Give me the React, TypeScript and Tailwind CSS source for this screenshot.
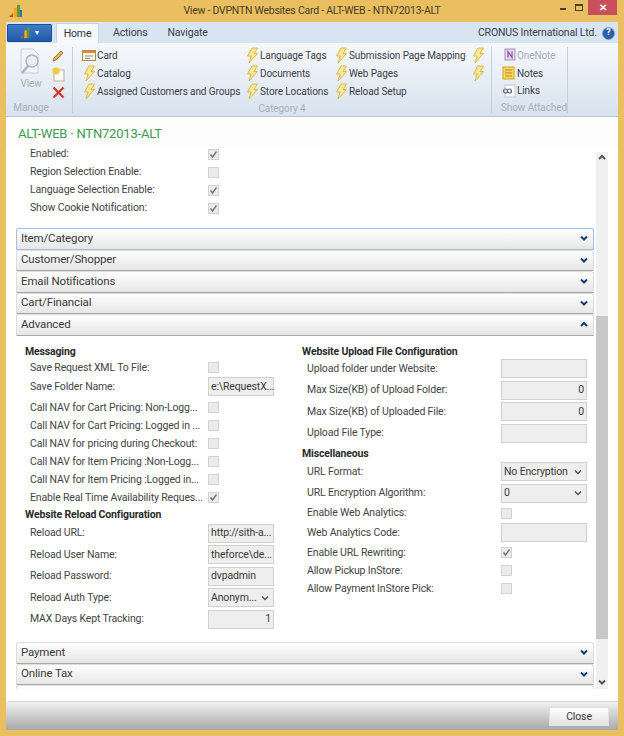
import type { ReactNode } from "react";

function Bolt() {
  return (
    <svg width="14" height="17" viewBox="0 0 14 17" className="shrink-0">
      <path d="M7 1 L12.5 1 L9 6.5 L12.5 6.5 L4 16 L6.2 9 L2.5 9 Z" fill="#fbe89a" stroke="#dcb84a" strokeWidth="1" strokeLinejoin="round" />
    </svg>
  );
}

function Chevron({ up = false, color = "#1d3a78", w = 2 }: { up?: boolean; color?: string; w?: number }) {
  return (
    <svg width="8" height="6" viewBox="0 0 8 6" className="shrink-0">
      <polyline points={up ? "1,5 4,2 7,5" : "1,1.5 4,4.5 7,1.5"} fill="none" stroke={color} strokeWidth={w} />
    </svg>
  );
}

function AppLogo({ size = 16 }: { size?: number }) {
  return (
    <svg width={size} height={size} viewBox="0 0 16 16" className="shrink-0">
      <path d="M1 14 L5 10 L5 14 Z" fill="#d9481e" />
      <rect x="6" y="5" width="3" height="9" fill="#f0a820" />
      <rect x="9" y="2" width="3" height="12" fill="#5c9a3a" />
      <rect x="12" y="7" width="2" height="7" fill="#3d6fb0" />
    </svg>
  );
}

function RibbonItem({ icon, children, dim = false }: { icon: ReactNode; children?: ReactNode; dim?: boolean }) {
  return (
    <div className={"flex h-[18px] items-center gap-[1px] pb-[1px] whitespace-nowrap " + (dim ? "text-[#a8adb5]" : "text-[#3c4048]")}>
      <span className="flex w-[15px] justify-center">{icon}</span>
      {children}
    </div>
  );
}

function Separator() {
  return <div className="h-[66px] w-px bg-[#c5cfdb]" />;
}

function GroupLabel({ children }: { children: ReactNode }) {
  return <div className="h-[16px] text-center leading-[16px] text-[#a9b0b9]">{children}</div>;
}

function Check({ on = false, label }: { on?: boolean; label: string }) {
  return (
    <span aria-label={label} className="flex h-[11px] w-[11px] items-center justify-center border border-[#d2d2d2] bg-[#ebebeb]">
      {on && (
        <svg width="9" height="9" viewBox="0 0 9 9">
          <polyline points="1.5,4.5 3.5,7 7.5,1.5" fill="none" stroke="#757575" strokeWidth="1.4" />
        </svg>
      )}
    </span>
  );
}

function CheckRow({ label, on, labelW = "w-[178px]" }: { label: string; on?: boolean; labelW?: string }) {
  return (
    <div className="flex h-[18px] items-center pl-[5px]">
      <div className={labelW + " whitespace-nowrap text-[#444444]"}>{label}</div>
      <Check on={on} label={label} />
    </div>
  );
}

function FieldRow({
  label,
  value,
  right = false,
  select = false,
  labelW = "w-[178px]",
  fieldW = "w-[66px]",
}: {
  label: string;
  value?: string;
  right?: boolean;
  select?: boolean;
  labelW?: string;
  fieldW?: string;
}) {
  return (
    <div className="flex h-[21.5px] items-center pl-[5px]">
      <div className={labelW + " whitespace-nowrap text-[#444444]"}>{label}</div>
      <div
        className={
          fieldW +
          " flex h-[19px] items-center border border-[#d0d0d0] bg-[#eeeeee] px-[2px] whitespace-nowrap text-[#3a3a3a] " +
          (right ? "justify-end" : "justify-between")
        }
      >
        <span>{value}</span>
        {select && (
          <span className="mr-[2px]">
            <Chevron color="#555555" w={1.5} />
          </span>
        )}
      </div>
    </div>
  );
}

function Heading({ children, h }: { children: ReactNode; h: string }) {
  return <div className={h + " flex items-center font-bold whitespace-nowrap text-[#2a2a2a]"}>{children}</div>;
}

function Section({ title, open = false, focus = false }: { title: string; open?: boolean; focus?: boolean }) {
  return (
    <div
      className={
        "flex h-[21.5px] shrink-0 items-center justify-between rounded-t-[3px] border bg-gradient-to-b from-white to-[#e6e6e6] pr-[5px] pb-[1px] pl-[4px] text-[11.5px] text-[#3a3a3a] " +
        (focus ? "border-[#a3bfe6] border-b-[#a9bcd8]" : "border-[#dddddd] border-b-[#a8a8a8]")
      }
    >
      <span>{title}</span>
      <Chevron up={open} />
    </div>
  );
}

export default function App() {
  const rightLabel = "w-[194px]";
  const rightField = "w-[86px]";
  return (
    <div className="flex h-[736px] w-[624px] flex-col overflow-hidden bg-[#e9bf62] font-['Roboto',sans-serif] text-[10.5px] tracking-[-0.15px]">
      {/* title bar */}
      <div className="relative flex h-[22px] shrink-0 items-center justify-center text-[10.5px] tracking-[-0.25px] text-[#4b3d22]">
        <span className="absolute top-[3px] left-[8px]">
          <AppLogo />
        </span>
        View - DVPNTN Websites Card - ALT-WEB - NTN72013-ALT
        <div className="absolute top-0 right-[7px] flex items-start">
          <div className="mt-[8px] mr-[9px] h-[2px] w-[6px] bg-[#4a4030]" />
          <div className="mt-[4px] mr-[5px] h-[7px] w-[8px] border border-t-2 border-[#4a4030]" />
          <div className="flex h-[15px] w-[29px] items-center justify-center bg-[#c9505a] text-[10px] font-bold text-white">
            ✕
          </div>
        </div>
      </div>

      <div className="mx-[6px] flex flex-1 flex-col bg-white">
        {/* tab strip */}
        <div className="flex h-[21px] shrink-0 items-end bg-[#d8e4f2] pl-px text-[#3c4048]">
          <div className="mb-[1px] flex h-[18px] w-[45px] items-center justify-center rounded-[1px] border border-[#1d4f94] bg-gradient-to-b from-[#3d7cc9] to-[#1f5aa8]">
            <AppLogo size={14} />
            <span className="ml-[1px] text-[7px] text-white">▼</span>
          </div>
          <div className="ml-[4px] flex h-[20px] w-[43px] items-center justify-center border border-b-0 border-[#c6d3e2] bg-[#f7f9fc] text-[#333333]">
            Home
          </div>
          <div className="ml-[14px] flex h-[20px] items-center">Actions</div>
          <div className="ml-[20px] flex h-[20px] items-center">Navigate</div>
          <div className="ml-auto flex h-[20px] items-center pr-[3px]">
            CRONUS International Ltd.
            <span className="ml-[5px] flex h-[13px] w-[13px] items-center justify-center rounded-full border border-[#7f9fd0] bg-[#2f5ea8] text-[9px] font-bold text-white">
              ?
            </span>
          </div>
        </div>

        {/* ribbon */}
        <div className="flex h-[74px] shrink-0 border-b border-[#b9c6d4] bg-gradient-to-b from-[#f6f8fb] to-[#d8e3ef] pt-[4px] text-[10px] tracking-[-0.1px]">
          <div className="ml-[5px] flex w-[40px] flex-col items-center">
            <div className="flex h-[53px] flex-col items-center leading-[12px] text-[#a8adb5]">
              <svg width="26" height="30" viewBox="0 0 26 30">
                <path d="M3 2 H15 L20 7 V26 H3 Z" fill="#f2f4f7" stroke="#c9ced6" />
                <circle cx="14" cy="14" r="6" fill="#e6edf5" stroke="#a9b2bd" strokeWidth="1.5" />
                <line x1="10" y1="19" x2="4" y2="26" stroke="#a9b2bd" strokeWidth="2.5" />
              </svg>
              <span className="mt-[1px]">View</span>
            </div>
            <GroupLabel>Manage</GroupLabel>
          </div>
          <div className="flex w-[14px] flex-col items-center">
            <div className="flex h-[18px] items-center">
              <svg width="14" height="14" viewBox="0 0 14 14">
                <path d="M2 12 L3 9 L10 2 L12 4 L5 11 Z" fill="#e8b252" stroke="#8c6a34" strokeWidth="0.8" />
              </svg>
            </div>
            <div className="flex h-[18px] items-center">
              <svg width="14" height="15" viewBox="0 0 14 15">
                <rect x="3" y="3" width="10" height="11" fill="#fbfbf6" stroke="#b9b39a" />
                <circle cx="5" cy="4" r="3.5" fill="#f5c93a" />
              </svg>
            </div>
            <div className="flex h-[18px] items-center">
              <svg width="13" height="13" viewBox="0 0 13 13">
                <path d="M1.5 1.5 L11.5 11.5 M11.5 1.5 L1.5 11.5" stroke="#d23a2c" strokeWidth="2.4" />
              </svg>
            </div>
          </div>
          <div className="mr-[8px] ml-[7px]">
            <Separator />
          </div>
          <div className="flex flex-col">
            <div className="flex">
              <div className="flex w-[163px] flex-col">
                <RibbonItem
                  icon={
                    <svg width="14" height="13" viewBox="0 0 14 13">
                      <rect x="0.5" y="1.5" width="13" height="10" fill="#fdf6e3" stroke="#a88a5c" />
                      <rect x="0.5" y="1.5" width="13" height="2.5" fill="#d98a3c" />
                      <path d="M3 7 H11 M3 9.5 H8" stroke="#8c8c8c" />
                    </svg>
                  }
                >
                  Card
                </RibbonItem>
                <RibbonItem icon={<Bolt />}>Catalog</RibbonItem>
                <RibbonItem icon={<Bolt />}>Assigned Customers and Groups</RibbonItem>
              </div>
              <div className="flex w-[89px] flex-col">
                <RibbonItem icon={<Bolt />}>Language Tags</RibbonItem>
                <RibbonItem icon={<Bolt />}>Documents</RibbonItem>
                <RibbonItem icon={<Bolt />}>Store Locations</RibbonItem>
              </div>
              <div className="flex w-[137px] flex-col">
                <RibbonItem icon={<Bolt />}>Submission Page Mapping</RibbonItem>
                <RibbonItem icon={<Bolt />}>Web Pages</RibbonItem>
                <RibbonItem icon={<Bolt />}>Reload Setup</RibbonItem>
              </div>
              <div className="flex w-[21px] flex-col">
                <RibbonItem icon={<Bolt />} />
                <RibbonItem icon={<Bolt />} />
              </div>
            </div>
            <div className="flex w-[402px] justify-center">
              <GroupLabel>Category 4</GroupLabel>
            </div>
          </div>
          <div className="mr-[9px]">
            <Separator />
          </div>
          <div className="flex w-[66px] flex-col">
            <RibbonItem
              dim
              icon={
                <svg width="14" height="14" viewBox="0 0 14 14">
                  <rect x="3" y="1" width="10" height="11" fill="#e6d8ec" stroke="#b08cc0" />
                  <path d="M6 9.5 V3.5 L10 9.5 V3.5" fill="none" stroke="#8a4fa6" strokeWidth="1.2" />
                </svg>
              }
            >
              OneNote
            </RibbonItem>
            <RibbonItem
              icon={
                <svg width="13" height="14" viewBox="0 0 13 14">
                  <rect x="1" y="1" width="11" height="12" fill="#f7d65a" stroke="#cfa52e" />
                  <path d="M3 4 H10 M3 7 H10 M3 10 H10" stroke="#b98d2a" />
                </svg>
              }
            >
              Notes
            </RibbonItem>
            <RibbonItem
              icon={
                <svg width="14" height="14" viewBox="0 0 14 14">
                  <rect x="3" y="1" width="10" height="12" fill="#fbfcfe" stroke="#c2c8d0" />
                  <circle cx="3.5" cy="7" r="2" fill="none" stroke="#5a6a80" strokeWidth="1.2" />
                  <circle cx="7.5" cy="7" r="2" fill="none" stroke="#5a6a80" strokeWidth="1.2" />
                </svg>
              }
            >
              Links
            </RibbonItem>
            <div className="whitespace-nowrap">
              <GroupLabel>Show Attached</GroupLabel>
            </div>
          </div>
          <Separator />
        </div>

        {/* record caption */}
        <div className="flex h-[31px] shrink-0 items-center bg-[#fdfdfd] pt-[3px] pl-[12px] text-[13px] tracking-[-0.2px] text-[#3f9a52]">
          ALT-WEB · NTN72013-ALT
        </div>

        {/* scrolling form */}
        <div className="flex h-[541px] shrink-0 overflow-hidden bg-white">
          <div className="ml-[10px] flex w-[578px] flex-col">
            <div className="-mt-[3px] flex h-[83px] shrink-0 flex-col pl-[9px]">
              <CheckRow label="Enabled:" on />
              <CheckRow label="Region Selection Enable:" />
              <CheckRow label="Language Selection Enable:" on />
              <CheckRow label="Show Cookie Notification:" on />
            </div>
            <Section title="Item/Category" focus />
            <Section title="Customer/Shopper" />
            <Section title="Email Notifications" />
            <Section title="Cart/Financial" />
            <Section title="Advanced" open />
            <div className="flex h-[306.5px] shrink-0 pt-[8px] pl-[9px]">
              <div className="w-[277px]">
                <Heading h="h-[16px]">Messaging</Heading>
                <div className="flex h-[16px] items-center pl-[5px]">
                  <div className="w-[178px] text-[#444444]">Save Request XML To File:</div>
                  <Check label="Save Request XML To File" />
                </div>
                <div className="h-[0.5px]" />
                <FieldRow label="Save Folder Name:" value="e:\RequestX..." />
                <div className="h-[1px]" />
                <CheckRow label="Call NAV for Cart Pricing: Non-Logg..." />
                <CheckRow label="Call NAV for Cart Pricing: Logged in ..." />
                <CheckRow label="Call NAV for pricing during Checkout:" />
                <CheckRow label="Call NAV for Item Pricing :Non-Logg..." />
                <CheckRow label="Call NAV for Item Pricing :Logged in..." />
                <CheckRow label="Enable Real Time Availability Reques..." on />
                <Heading h="h-[16px]">Website Reload Configuration</Heading>
                <FieldRow label="Reload URL:" value="http://sith-a..." />
                <FieldRow label="Reload User Name:" value="theforce\de..." />
                <FieldRow label="Reload Password:" value="dvpadmin" />
                <FieldRow label="Reload Auth Type:" value="Anonym..." select />
                <FieldRow label="MAX Days Kept Tracking:" value="1" right />
              </div>
              <div className="w-[285px]">
                <Heading h="h-[14.5px] pt-[2px]">Website Upload File Configuration</Heading>
                <FieldRow label="Upload folder under Website:" labelW={rightLabel} fieldW={rightField} />
                <FieldRow label="Max Size(KB) of Upload Folder:" value="0" right labelW={rightLabel} fieldW={rightField} />
                <FieldRow label="Max Size(KB) of Uploaded File:" value="0" right labelW={rightLabel} fieldW={rightField} />
                <FieldRow label="Upload File Type:" labelW={rightLabel} fieldW={rightField} />
                <Heading h="h-[17px] pt-[2px]">Miscellaneous</Heading>
                <FieldRow label="URL Format:" value="No Encryption" select labelW={rightLabel} fieldW={rightField} />
                <FieldRow label="URL Encryption Algorithm:" value="0" select labelW={rightLabel} fieldW={rightField} />
                <CheckRow label="Enable Web Analytics:" labelW={rightLabel} />
                <FieldRow label="Web Analytics Code:" labelW={rightLabel} fieldW={rightField} />
                <CheckRow label="Enable URL Rewriting:" on labelW={rightLabel} />
                <CheckRow label="Allow Pickup InStore:" labelW={rightLabel} />
                <CheckRow label="Allow Payment InStore Pick:" labelW={rightLabel} />
              </div>
            </div>
            <Section title="Payment" />
            <Section title="Online Tax" />
            <Section title="" />
          </div>

          {/* scrollbar */}
          <div className="mt-[4px] ml-[2px] flex w-[12px] flex-col items-center bg-[#f0f0f0]">
            <div className="flex h-[164px] w-full shrink-0 justify-center pt-[2px]">
              <Chevron up color="#555555" />
            </div>
            <div className="h-[323px] w-full shrink-0 bg-[#c8c8c8]" />
            <div className="flex w-full flex-1 items-end justify-center pb-[4px]">
              <Chevron color="#555555" />
            </div>
          </div>
        </div>

        <div className="h-[12px] shrink-0 bg-white" />

        {/* footer */}
        <div className="flex h-[29px] shrink-0 items-start justify-end rounded-tl-[4px] border-t border-[#d4d4d4] bg-gradient-to-b from-[#f2f2f2] to-[#a8a8a8] pt-[5px] pr-[9px]">
          <div className="flex h-[19px] w-[60px] items-center justify-center border border-[#e0e0e0] bg-gradient-to-b from-white to-[#e2e2e2] text-[#3a3a3a]">
            Close
          </div>
        </div>
      </div>
      <div className="h-[6px] shrink-0" />
    </div>
  );
}
